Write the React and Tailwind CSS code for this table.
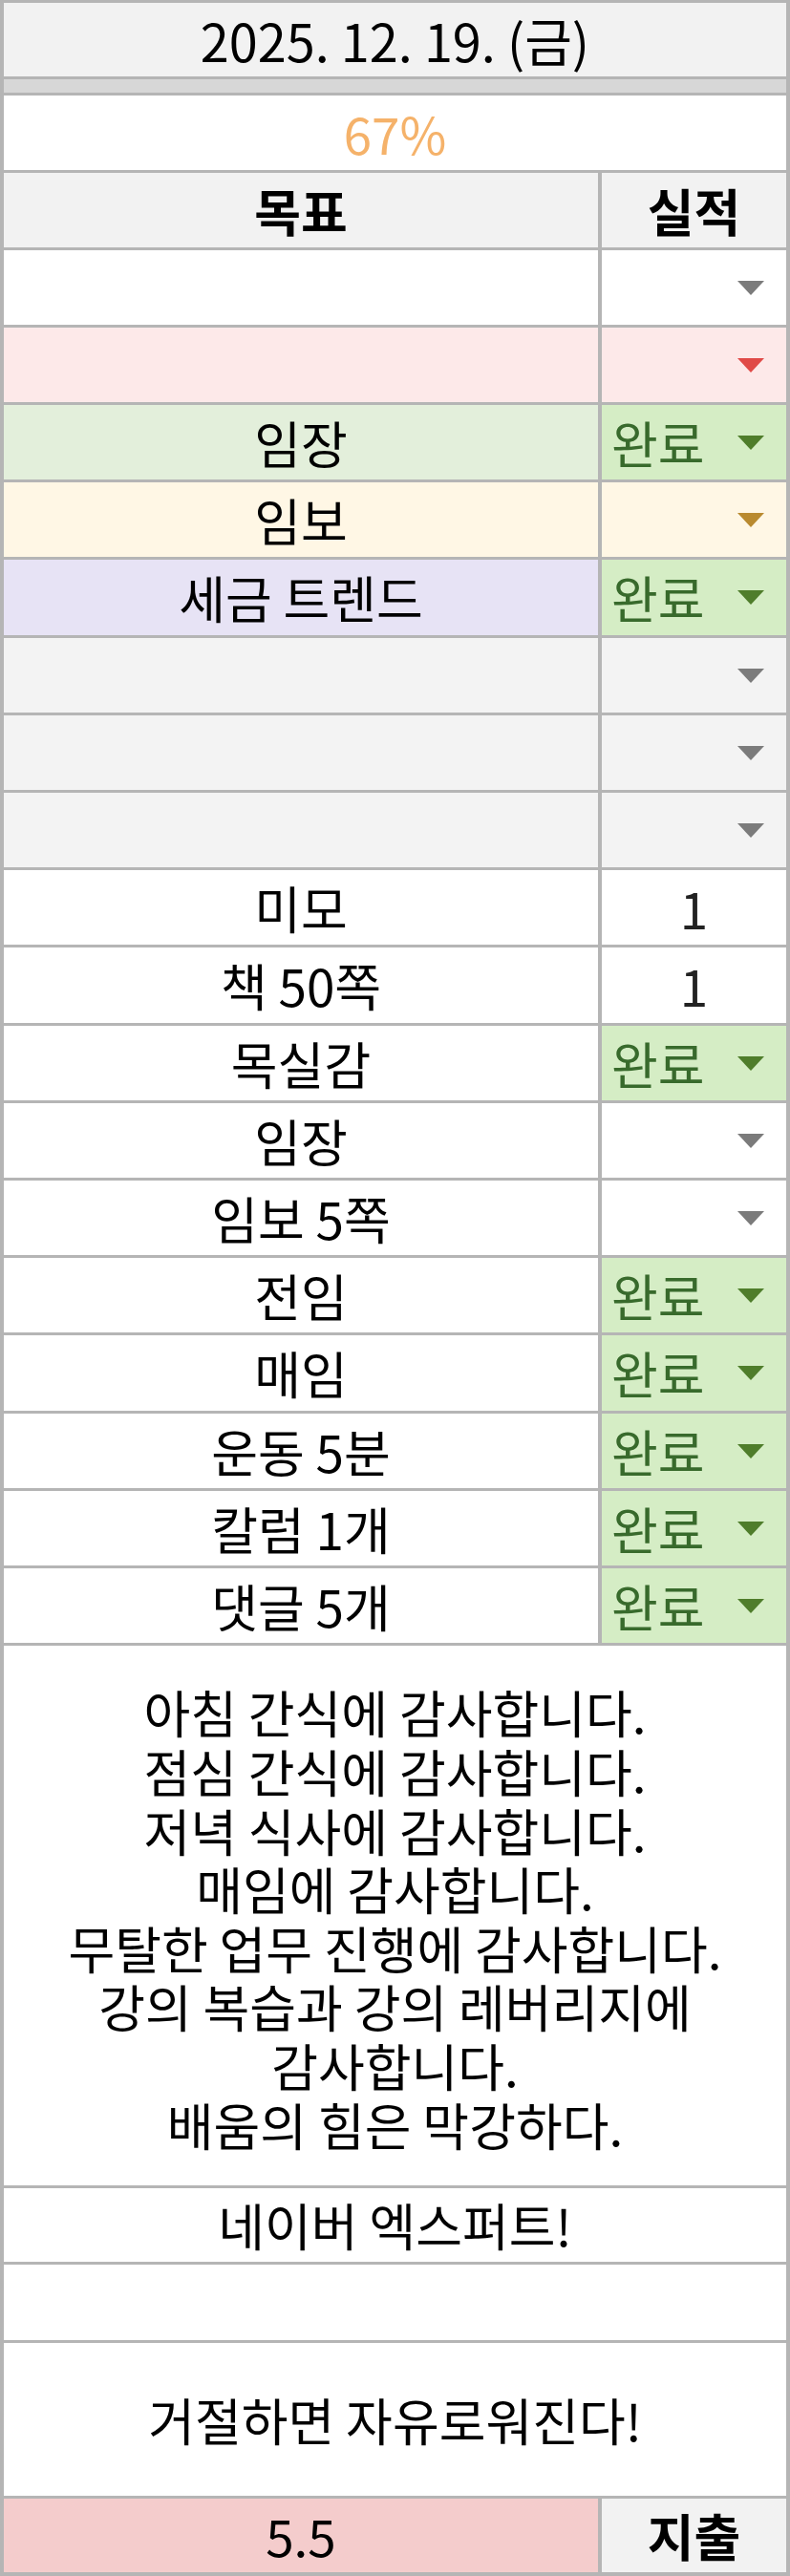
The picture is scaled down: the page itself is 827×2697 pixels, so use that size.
import React from 'react';

// caret colours for the dropdown cells
const CARET = {
  gray: '#7b7b7b',
  red: '#e04a47',
  amber: '#b98a2f',
  green: '#4f7d2b',
};

const rows = [
  { goal: '', left: 'bg-white', right: 'bg-white', caret: 'gray', h: 'h-[78px]' },
  { goal: '', left: 'bg-[#fde9e9]', right: 'bg-[#fde9e9]', caret: 'red', h: 'h-[78px]' },
  { goal: '임장', left: 'bg-[#e3efdb]', right: 'bg-[#d5edc5]', done: true, h: 'h-[78px]' },
  { goal: '임보', left: 'bg-[#fff7e5]', right: 'bg-[#fff7e5]', caret: 'amber', h: 'h-[78px]' },
  { goal: '세금 트렌드', left: 'bg-[#e7e3f5]', right: 'bg-[#d5edc5]', done: true, h: 'h-[79px]' },
  { goal: '', left: 'bg-[#f3f3f3]', right: 'bg-[#f3f3f3]', caret: 'gray', h: 'h-[78px]' },
  { goal: '', left: 'bg-[#f3f3f3]', right: 'bg-[#f3f3f3]', caret: 'gray', h: 'h-[78px]' },
  { goal: '', left: 'bg-[#f3f3f3]', right: 'bg-[#f3f3f3]', caret: 'gray', h: 'h-[78px]' },
  { goal: '미모', left: 'bg-white', right: 'bg-white', value: '1', h: 'h-[78px]' },
  { goal: '책 50쪽', left: 'bg-white', right: 'bg-white', value: '1', h: 'h-[79px]' },
  { goal: '목실감', left: 'bg-white', right: 'bg-[#d5edc5]', done: true, h: 'h-[78px]' },
  { goal: '임장', left: 'bg-white', right: 'bg-white', caret: 'gray', h: 'h-[78px]' },
  { goal: '임보 5쪽', left: 'bg-white', right: 'bg-white', caret: 'gray', h: 'h-[78px]' },
  { goal: '전임', left: 'bg-white', right: 'bg-[#d5edc5]', done: true, h: 'h-[78px]' },
  { goal: '매임', left: 'bg-white', right: 'bg-[#d5edc5]', done: true, h: 'h-[79px]' },
  { goal: '운동 5분', left: 'bg-white', right: 'bg-[#d5edc5]', done: true, h: 'h-[78px]' },
  { goal: '칼럼 1개', left: 'bg-white', right: 'bg-[#d5edc5]', done: true, h: 'h-[78px]' },
  { goal: '댓글 5개', left: 'bg-white', right: 'bg-[#d5edc5]', done: true, h: 'h-[78px]' },
];

const thanks = [
  '아침 간식에 감사합니다.',
  '점심 간식에 감사합니다.',
  '저녁 식사에 감사합니다.',
  '매임에 감사합니다.',
  '무탈한 업무 진행에 감사합니다.',
  '강의 복습과 강의 레버리지에',
  '감사합니다.',
  '배움의 힘은 막강하다.',
];

const Caret = ({ color }) => (
  <svg width="28" height="15" viewBox="0 0 28 15" className="shrink-0">
    <path d="M0 0H28L14 15Z" fill={CARET[color]} />
  </svg>
);

const ResultCell = ({ row }) => {
  if (row.done) {
    return (
      <div className={`${row.right} flex items-center justify-between pl-[10px] pr-[23px]`}>
        <span className="text-[#386a2c]">완료</span>
        <Caret color="green" />
      </div>
    );
  }
  if (row.value) {
    return (
      <div className={`${row.right} flex items-center justify-center text-[#222]`}>
        {row.value}
      </div>
    );
  }
  return (
    <div className={`${row.right} flex items-center justify-end pr-[23px]`}>
      <Caret color={row.caret} />
    </div>
  );
};

const App = () => {
  return (
    <div className="w-[827px] h-[2697px] bg-[#b5b5b5] pt-[3px] px-[4px] pb-[4px] flex flex-col font-['Noto_Sans_CJK_KR','Noto_Sans',sans-serif] text-[53px] leading-none text-black">
      {/* date header */}
      <div className="h-[77px] shrink-0 bg-[#f2f2f2] flex items-center justify-center text-[54px]">
        2025. 12. 19. (금)
      </div>
      <div className="h-[3px] shrink-0" />
      <div className="h-[14px] shrink-0 bg-[#d7d7d7]" />
      <div className="h-[3px] shrink-0" />

      {/* progress */}
      <div className="h-[78px] shrink-0 bg-white flex items-center justify-center text-[#f5b26a]">
        67%
      </div>

      {/* goal table */}
      <div className="mt-[3px] flex flex-col gap-[3px]">
        <div className="h-[78px] grid grid-cols-[622px_193px] gap-x-[4px] font-bold">
          <div className="bg-[#f2f2f2] flex items-center justify-center">목표</div>
          <div className="bg-[#f2f2f2] flex items-center justify-center">실적</div>
        </div>
        {rows.map((row, i) => (
          <div key={i} className={`${row.h} grid grid-cols-[622px_193px] gap-x-[4px]`}>
            <div className={`${row.left} flex items-center justify-center`}>{row.goal}</div>
            <ResultCell row={row} />
          </div>
        ))}
      </div>

      {/* gratitude note */}
      <div className="mt-[3px] h-[565px] shrink-0 bg-white flex flex-col items-center justify-center pt-[6px]">
        {thanks.map((line, i) => (
          <div key={i} className="h-[61.6px] flex items-center whitespace-nowrap">
            {line}
          </div>
        ))}
      </div>

      <div className="mt-[3px] h-[77px] shrink-0 bg-white flex items-center justify-center">
        네이버 엑스퍼트!
      </div>
      <div className="mt-[3px] h-[79px] shrink-0 bg-white" />
      <div className="mt-[3px] h-[160px] shrink-0 bg-white flex items-center justify-center">
        거절하면 자유로워진다!
      </div>

      {/* spending */}
      <div className="mt-[3px] h-[77px] shrink-0 grid grid-cols-[622px_193px] gap-x-[4px]">
        <div className="bg-[#f4cccc] flex items-center justify-center">5.5</div>
        <div className="bg-[#f2f2f2] flex items-center justify-center font-bold">지출</div>
      </div>
    </div>
  );
};

export default App;
